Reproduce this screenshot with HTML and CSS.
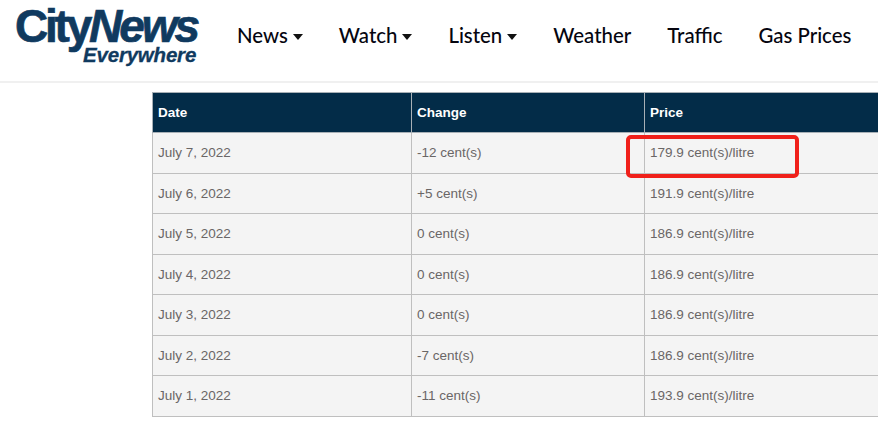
FILE: index.html
```html
<!DOCTYPE html>
<html lang="en">
<head>
<meta charset="utf-8">
<title>CityNews Everywhere - Gas Prices</title>
<link rel="stylesheet" href="styles.css">
</head>
<body>
<header class="site-header">
  <a class="logo" href="#">
    <span class="logo-main"><span class="logo-city">City</span><span class="logo-news">News</span></span>
    <span class="logo-sub">Everywhere</span>
  </a>
  <nav class="nav">
    <a href="#">News<i class="caret"></i></a>
    <a href="#">Watch<i class="caret"></i></a>
    <a href="#">Listen<i class="caret"></i></a>
    <a href="#">Weather</a>
    <a href="#">Traffic</a>
    <a href="#">Gas Prices</a>
  </nav>
</header>
<main class="content">
  <div class="table-wrap">
    <table class="prices">
      <colgroup><col class="c1"><col class="c2"><col class="c3"></colgroup>
      <thead><tr><th>Date</th><th>Change</th><th>Price</th></tr></thead>
      <tbody>
        <tr><td>July 7, 2022</td><td>-12 cent(s)</td><td>179.9 cent(s)/litre</td></tr>
        <tr><td>July 6, 2022</td><td>+5 cent(s)</td><td>191.9 cent(s)/litre</td></tr>
        <tr><td>July 5, 2022</td><td>0 cent(s)</td><td>186.9 cent(s)/litre</td></tr>
        <tr><td>July 4, 2022</td><td>0 cent(s)</td><td>186.9 cent(s)/litre</td></tr>
        <tr><td>July 3, 2022</td><td>0 cent(s)</td><td>186.9 cent(s)/litre</td></tr>
        <tr><td>July 2, 2022</td><td>-7 cent(s)</td><td>186.9 cent(s)/litre</td></tr>
        <tr><td>July 1, 2022</td><td>-11 cent(s)</td><td>193.9 cent(s)/litre</td></tr>
      </tbody>
    </table>
    <div class="highlight"></div>
  </div>
</main>
</body>
</html>
```
FILE: styles.css
```css
* { box-sizing: border-box; }
html, body { margin: 0; height: 100%; overflow: hidden; background: #fff; }
body { font-family: "Liberation Sans", Arial, sans-serif; }
a { color: inherit; text-decoration: none; }

.site-header {
  height: 83px;
  border-bottom: 2px solid #f0f0f0;
  display: flex;
  align-items: flex-start;
  padding-left: 15px;
}
.logo {
  width: 222px;
  flex: none;
  display: flex;
  flex-direction: column;
  color: #103a5f;
  font-weight: 700;
  padding-top: 6px;
}
.logo-main { font-size: 46px; line-height: 40px; letter-spacing: -3.2px; white-space: nowrap; -webkit-text-stroke: .7px #103a5f; }
.logo-news { font-style: italic; letter-spacing: -3.1px; }
.logo-sub { font-size: 20.5px; line-height: 16px; font-style: italic; letter-spacing: -.2px; margin-left: 68px; margin-top: 1px; -webkit-text-stroke: .3px #103a5f; }

.nav {
  display: flex;
  gap: 36px;
  padding-top: 22px;
  font-family: Lato, sans-serif;
  font-size: 20.4px;
  line-height: 26px;
  font-weight: 500;
  color: #05050f;
  white-space: nowrap;
}
.caret {
  display: inline-block;
  margin-left: 5px;
  vertical-align: 3px;
  border-left: 5.5px solid transparent;
  border-right: 5.5px solid transparent;
  border-top: 6px solid #111;
}

.content { padding: 9px 0 0 152px; }
.table-wrap { position: relative; width: 900px; }
.prices {
  width: 900px;
  table-layout: fixed;
  border-collapse: collapse;
  font-size: 13.5px;
  color: #6a6666;
}
.c1 { width: 259px; }
.c2 { width: 233px; }
.prices th, .prices td {
  border: 1px solid #bfbfbf;
  padding: 0 5px;
  text-align: left;
  height: 40.5px;
}
.prices th {
  height: 40px;
  background: #032c48;
  color: #fff;
  font-weight: 700;
  font-size: 13.5px;
  border-color: #a8b0b6;
}
.prices td { background: #f4f4f4; }
.highlight {
  position: absolute;
  left: 474px;
  top: 43px;
  width: 173px;
  height: 43px;
  border: 4px solid #f0201a;
  border-radius: 5px;
}
```
